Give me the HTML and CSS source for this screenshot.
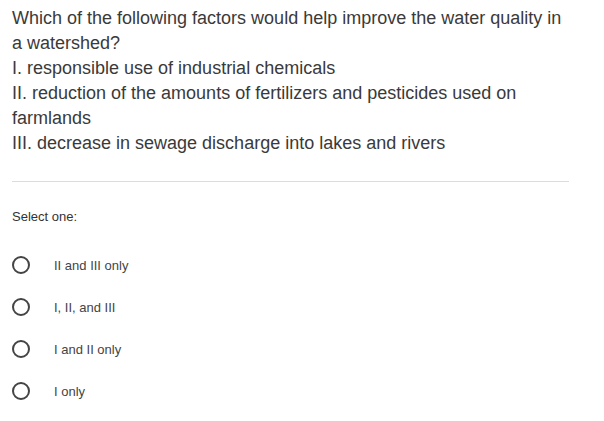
FILE: index.html
```html
<!DOCTYPE html>
<html>
<head>
<meta charset="utf-8">
<link rel="stylesheet" href="styles.css">
</head>
<body>
<div class="question">
  <div class="qtext">Which of the following factors would help improve the water quality in a watershed?<br>I. responsible use of industrial chemicals<br>II. reduction of the amounts of fertilizers and pesticides used on farmlands<br>III. decrease in sewage discharge into lakes and rivers</div>
  <hr class="divider">
  <div class="prompt">Select one:</div>
  <div class="options">
    <label class="option"><span class="radio"></span><span class="label">II and III only</span></label>
    <label class="option"><span class="radio"></span><span class="label">I, II, and III</span></label>
    <label class="option"><span class="radio"></span><span class="label">I and II only</span></label>
    <label class="option"><span class="radio"></span><span class="label">I only</span></label>
  </div>
</div>
</body>
</html>
```
FILE: styles.css
```css
html, body {
  margin: 0;
  padding: 0;
  background: #fff;
}
body {
  font-family: "Liberation Sans", Arial, sans-serif;
  color: #333;
}
.question {
  padding: 6px 30px 0 12px;
}
.qtext {
  font-size: 18px;
  line-height: 25px;
  color: #3a3a3a;
}
.divider {
  border: 0;
  border-top: 1px solid #dcdcdc;
  margin: 25px 5px 0 0;
  height: 0;
}
.prompt {
  font-size: 13px;
  line-height: 16px;
  margin-top: 27px;
  color: #333;
}
.options {
  display: flex;
  flex-direction: column;
  gap: 22px;
  margin-top: 30px;
}
.option {
  display: flex;
  align-items: center;
  height: 20px;
}
.radio {
  box-sizing: border-box;
  width: 18px;
  height: 18px;
  border: 2px solid #444;
  border-radius: 50%;
}
.label {
  font-size: 13px;
  color: #444;
  margin-left: 24px;
}
```
